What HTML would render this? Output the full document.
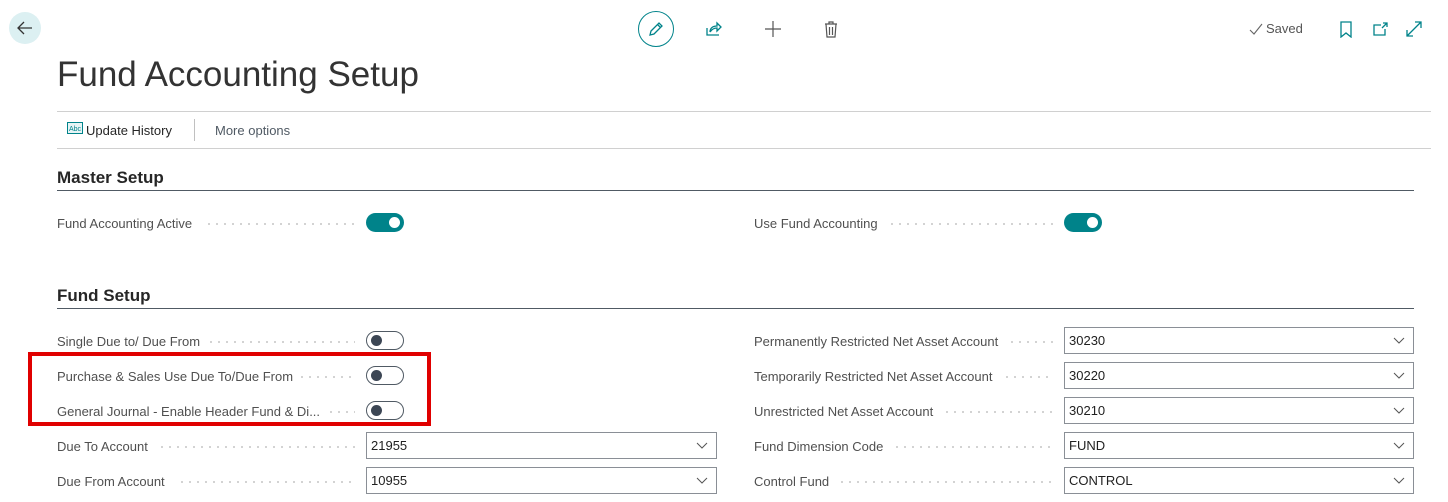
<!DOCTYPE html>
<html><head><meta charset="utf-8"><style>
*{box-sizing:border-box;margin:0;padding:0}
body{width:1448px;height:502px;background:#fff;font-family:"Liberation Sans",sans-serif;color:#212121;position:relative;overflow:hidden}
.a{position:absolute}
.lbl{position:absolute;font-size:13px;color:#505050;white-space:nowrap;display:flex;align-items:center;height:20px}
.dots{position:absolute;height:2px;background-image:radial-gradient(circle,#c4c4c4 0.8px,transparent 1px);background-size:8px 2px}
.ton{position:absolute;width:38px;height:19px;border-radius:10px;background:#00838a}
.ton::after{content:"";position:absolute;right:4px;top:4px;width:11px;height:11px;border-radius:50%;background:#fff}
.toff{position:absolute;width:38px;height:19px;border-radius:10px;border:1px solid #505a64;background:#fff}
.toff::after{content:"";position:absolute;left:4px;top:3px;width:11px;height:11px;border-radius:50%;background:#3c4654}
.inp{position:absolute;height:27px;border:1px solid #8a8f96;font-size:13px;color:#212121;padding:5px 0 0 4px}
.inp svg{position:absolute;right:8px;top:9px}
.sec{position:absolute;left:57px;font-size:17px;font-weight:bold;color:#262626}
.line{position:absolute;left:57px;width:1357px;height:1px;background:#505a64}
</style></head><body>
<div class="a" style="left:9px;top:12px;width:32px;height:32px;border-radius:50%;background:#dcf0f2"></div>
<svg class="a" style="left:15px;top:18px" width="20" height="20" viewBox="0 0 20 20"><path d="M17 10H3M9 4l-6 6 6 6" stroke="#333" stroke-width="1.3" fill="none"/></svg>

<div class="a" style="left:638px;top:11px;width:36px;height:36px;border-radius:50%;border:1.3px solid #00838a"></div>
<svg class="a" style="left:647px;top:20px" width="18" height="18" viewBox="0 0 18 18"><path d="M3 15l1-4 8-8 3 3-8 8z M10.5 4.5l3 3" stroke="#00838a" stroke-width="1.3" fill="none"/></svg>
<svg class="a" style="left:705px;top:20px" width="18" height="18" viewBox="0 0 18 18"><path d="M2 8v7h12 M5 12c0-4 3-6 7-6V3l4 4-4 4V8c-3 0-5 1-7 4" stroke="#00838a" stroke-width="1.3" fill="none"/></svg>
<svg class="a" style="left:764px;top:20px" width="18" height="18" viewBox="0 0 18 18"><path d="M9 1v16M1 9h16" stroke="#555" stroke-width="1.2"/></svg>
<svg class="a" style="left:823px;top:20px" width="16" height="18" viewBox="0 0 16 18"><path d="M2 4h12M6 4V2h4v2M3 4l1 13h8l1-13M6.5 7v8M9.5 7v8" stroke="#555" stroke-width="1.2" fill="none"/></svg>

<svg class="a" style="left:1249px;top:22px" width="14" height="14" viewBox="0 0 14 14"><path d="M1 8l4 4 8-10" stroke="#666" stroke-width="1.1" fill="none"/></svg>
<div class="a" style="left:1266px;top:21px;font-size:13px;color:#555">Saved</div>
<svg class="a" style="left:1339px;top:21px" width="14" height="17" viewBox="0 0 14 17"><path d="M2 1h10v15l-5-4-5 4z" stroke="#00838a" stroke-width="1.3" fill="none"/></svg>
<svg class="a" style="left:1372px;top:21px" width="17" height="16" viewBox="0 0 17 16"><path d="M9 4H2v10h11V8 M11 2h4v4M15 2l-5 5" stroke="#00838a" stroke-width="1.3" fill="none"/></svg>
<svg class="a" style="left:1406px;top:21px" width="16" height="16" viewBox="0 0 16 16"><path d="M1 15L15 1M9 1h6v6M1 9v6h6" stroke="#00838a" stroke-width="1.3" fill="none"/></svg>

<div class="a" style="left:57px;top:55px;font-size:35px;color:#333">Fund Accounting Setup</div>
<div class="a" style="left:57px;top:111px;width:1374px;height:1px;background:#d0d0d0"></div>
<div class="a" style="left:57px;top:148px;width:1374px;height:1px;background:#d0d0d0"></div>
<svg class="a" style="left:67px;top:122px" width="16" height="15" viewBox="0 0 16 15"><rect x="0.5" y="0.5" width="15" height="11" fill="#e6f4f5" stroke="#00838a"/><text x="2" y="9" font-size="7" fill="#00838a" font-family="Liberation Sans">Abc</text></svg>
<div class="a" style="left:86px;top:123px;font-size:13px;color:#262626">Update History</div>
<div class="a" style="left:194px;top:119px;width:1px;height:22px;background:#c0c0c0"></div>
<div class="a" style="left:215px;top:123px;font-size:13px;color:#505a64">More options</div>

<div class="sec" style="top:168px">Master Setup</div>
<div class="line" style="top:190px"></div>
<div class="lbl" style="left:57px;top:213px">Fund Accounting Active</div>
<div class="dots" style="left:205px;top:223px;width:150px"></div>
<div class="ton" style="left:366px;top:213px"></div>
<div class="lbl" style="left:754px;top:213px">Use Fund Accounting</div>
<div class="dots" style="left:888px;top:223px;width:165px"></div>
<div class="ton" style="left:1064px;top:213px"></div>

<div class="sec" style="top:286px">Fund Setup</div>
<div class="line" style="top:308px"></div>

<div class="lbl" style="left:57px;top:331px">Single Due to/ Due From</div>
<div class="dots" style="left:207px;top:341px;width:148px"></div>
<div class="toff" style="left:366px;top:331px"></div>
<div class="lbl" style="left:57px;top:366px">Purchase &amp; Sales Use Due To/Due From</div>
<div class="dots" style="left:298px;top:376px;width:57px"></div>
<div class="toff" style="left:366px;top:366px"></div>
<div class="lbl" style="left:57px;top:401px">General Journal - Enable Header Fund &amp; Di...</div>
<div class="dots" style="left:327px;top:411px;width:28px"></div>
<div class="toff" style="left:366px;top:401px"></div>
<div class="lbl" style="left:57px;top:436px">Due To Account</div>
<div class="dots" style="left:158px;top:446px;width:197px"></div>
<div class="inp" style="left:366px;top:432px;width:351px">21955<svg width="12" height="8" viewBox="0 0 12 8"><path d="M1 1l5 5 5-5" stroke="#555" fill="none"/></svg></div>
<div class="lbl" style="left:57px;top:471px">Due From Account</div>
<div class="dots" style="left:178px;top:481px;width:177px"></div>
<div class="inp" style="left:366px;top:467px;width:351px">10955<svg width="12" height="8" viewBox="0 0 12 8"><path d="M1 1l5 5 5-5" stroke="#555" fill="none"/></svg></div>

<div class="lbl" style="left:754px;top:331px">Permanently Restricted Net Asset Account</div>
<div class="dots" style="left:1008px;top:341px;width:45px"></div>
<div class="inp" style="left:1064px;top:327px;width:350px">30230<svg width="12" height="8" viewBox="0 0 12 8"><path d="M1 1l5 5 5-5" stroke="#555" fill="none"/></svg></div>
<div class="lbl" style="left:754px;top:366px">Temporarily Restricted Net Asset Account</div>
<div class="dots" style="left:1003px;top:376px;width:50px"></div>
<div class="inp" style="left:1064px;top:362px;width:350px">30220<svg width="12" height="8" viewBox="0 0 12 8"><path d="M1 1l5 5 5-5" stroke="#555" fill="none"/></svg></div>
<div class="lbl" style="left:754px;top:401px">Unrestricted Net Asset Account</div>
<div class="dots" style="left:943px;top:411px;width:110px"></div>
<div class="inp" style="left:1064px;top:397px;width:350px">30210<svg width="12" height="8" viewBox="0 0 12 8"><path d="M1 1l5 5 5-5" stroke="#555" fill="none"/></svg></div>
<div class="lbl" style="left:754px;top:436px">Fund Dimension Code</div>
<div class="dots" style="left:893px;top:446px;width:160px"></div>
<div class="inp" style="left:1064px;top:432px;width:350px">FUND<svg width="12" height="8" viewBox="0 0 12 8"><path d="M1 1l5 5 5-5" stroke="#555" fill="none"/></svg></div>
<div class="lbl" style="left:754px;top:471px">Control Fund</div>
<div class="dots" style="left:838px;top:481px;width:215px"></div>
<div class="inp" style="left:1064px;top:467px;width:350px">CONTROL<svg width="12" height="8" viewBox="0 0 12 8"><path d="M1 1l5 5 5-5" stroke="#555" fill="none"/></svg></div>

<div class="a" style="left:28px;top:352px;width:403px;height:74px;border:4px solid #e00000"></div>
</body></html>
